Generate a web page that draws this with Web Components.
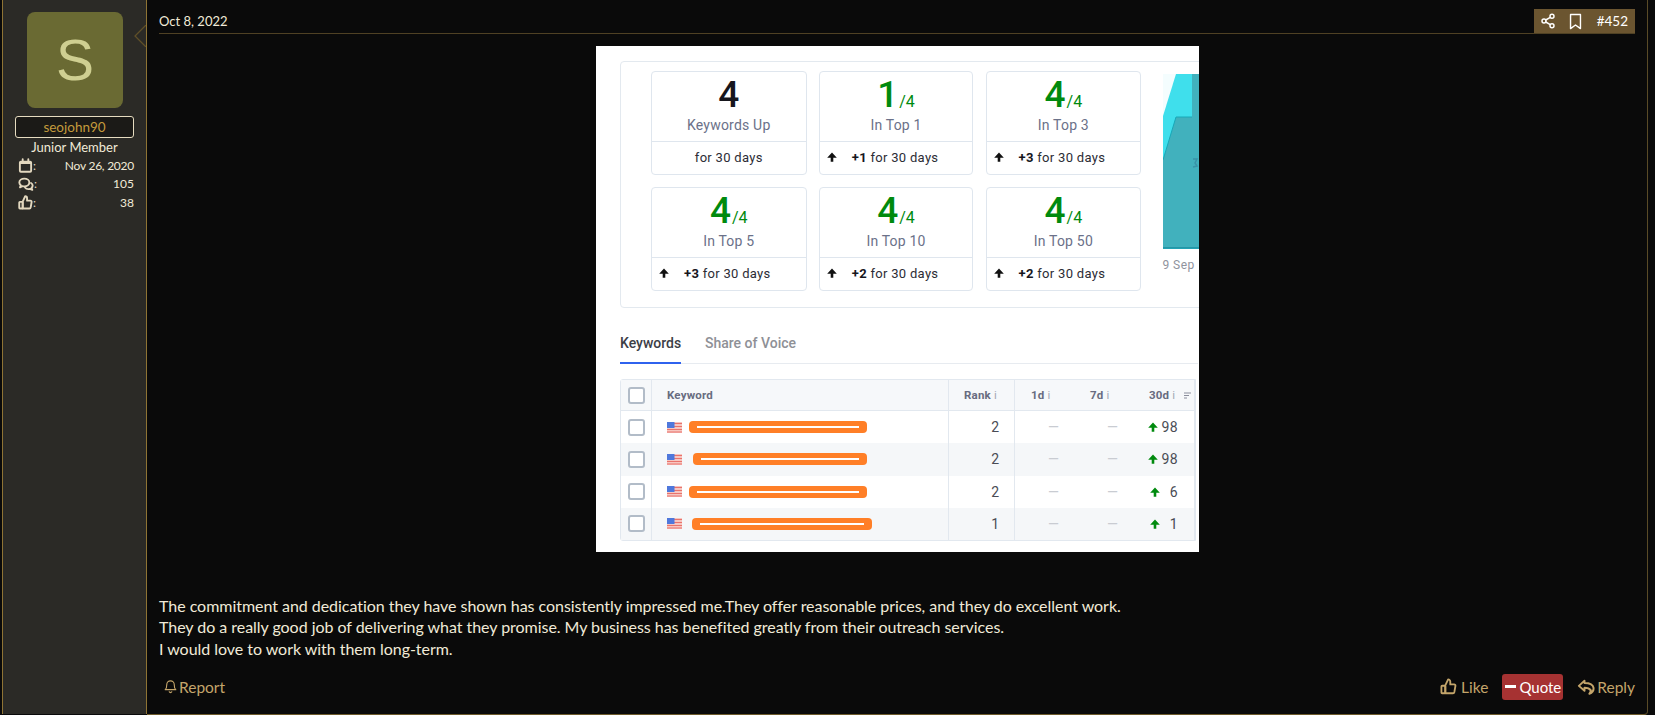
<!DOCTYPE html>
<html>
<head>
<meta charset="utf-8">
<title>Post 452</title>
<style>
  html, body { margin: 0; height: 715px; overflow: hidden; background: #0a0a0a; }
  body { font-family: "Lato", "Open Sans", sans-serif; color: #f1ead8; }
</style>
</head>
<body>
<forum-post></forum-post>

<script>
const icons = {
  share: `<circle cx="18" cy="5" r="3"/><circle cx="6" cy="12" r="3"/><circle cx="18" cy="19" r="3"/><path d="M8.6 13.5l6.8 4M15.4 6.5l-6.8 4"/>`,
  bookmark: `<path d="M5 2h14v20l-7-5-7 5z"/>`,
  calendar: `<rect x="3" y="6" width="18" height="16" rx="1.500"/><path d="M3 8h18M7.500 2v4M16.500 2v4"/>`,
  comments: `<path d="M9.500 4C5.300 4 2 6.500 2 9.700c0 1.700.9 3.100 2.300 4.100L3 17l3.800-1.700c.9.2 1.800.3 2.700.3 4.200 0 7.500-2.500 7.500-5.900S13.700 4 9.500 4z"/><path d="M19.500 10.500c1.500.9 2.500 2.300 2.500 3.900 0 1.400-.7 2.600-1.800 3.500l1.300 3-3.700-1.500c-2.800.7-5.800-.1-7.300-2.100"/>`,
  thumb: `<path d="M7.500 10.500l4-8.500c1.700 0 3 1.300 3 3v4h5.500c1.100 0 2 1 1.800 2.200l-1.500 8.500c-.2 1-1 1.800-2 1.800H7.500z"/><rect x="2" y="11" width="5.500" height="10.500" rx="1"/>`,
  bell: `<path d="M18 9a6 6 0 0 0-12 0c0 6-2.500 8-2.500 8h17S18 15 18 9z"/><path d="M10 20.500a2.200 2.200 0 0 0 4 0"/>`,
  reply: `<path d="M10 3.500L2.500 10.500 10 17v-4c4.500 0 7 1.300 8.500 3.500-.3 1.500-1 3-2 4.500 4-1.500 6-4.500 5.500-8-.6-4.200-5-6.300-12-6.300z"/>`,
};

// Draws one of the line icons above, sized by the size attribute.
class LineIcon extends HTMLElement {
  connectedCallback() {
    const size = this.getAttribute("size") || 16;
    const weight = this.getAttribute("weight") || 2;
    const root = this.shadowRoot || this.attachShadow({ mode: "open" });
    root.innerHTML = `
      <style>:host { display: inline-flex; flex: none; }</style>
      <svg width="${size}" height="${size}" viewBox="0 0 24 24" fill="none" stroke="currentColor"
        stroke-width="${weight}" stroke-linejoin="round" stroke-linecap="round">${icons[this.getAttribute("name")]}</svg>`;
  }
}
customElements.define("line-icon", LineIcon);

// Small solid up arrow used in the metric cards and the 30d column.
class UpArrow extends HTMLElement {
  connectedCallback() {
    const root = this.shadowRoot || this.attachShadow({ mode: "open" });
    root.innerHTML = `
      <style>:host { display: inline-flex; flex: none; }</style>
      <svg width="${this.getAttribute("size") || 10}" height="${this.getAttribute("size") || 10}" viewBox="0 0 10 10">
        <path fill="currentColor" d="M5 .5L9.800 5.800H6.300V9.800H3.700V5.800H.2z"/></svg>`;
  }
}
customElements.define("up-arrow", UpArrow);

const statTemplate = document.createElement("template");
statTemplate.innerHTML = `
  <style>
    :host { display: flex; align-items: center; height: 18.500px; font-size: 12px; color: #f1ead8; }
    .key { display: flex; align-items: center; color: #e3d8bf; font-size: 12px; }
    .value { margin-left: auto; }
  </style>
  <span class="key"><slot name="icon"></slot>:</span>
  <span class="value"><slot></slot></span>
`;
class UserStat extends HTMLElement {
  constructor() {
    super();
    this.attachShadow({ mode: "open" }).append(statTemplate.content.cloneNode(true));
  }
}
customElements.define("user-stat", UserStat);

const sidebarTemplate = document.createElement("template");
sidebarTemplate.innerHTML = `
  <style>
    :host {
      display: block; position: relative; box-sizing: border-box; width: 145px; height: 714px;
      margin-left: 2px; padding: 12px 12px 0 12px; background: #2b2a26;
      border-left: 1px solid #8f7434; border-right: 1px solid #8f7434;
    }
    .avatar {
      width: 96px; height: 96px; margin: 0 auto 0 12px; border-radius: 8px; background: #6a6a33; color: #cfcf91;
      display: flex; align-items: center; justify-content: center;
      font: 57px/1 "Liberation Sans", sans-serif;
    }
    .name {
      box-sizing: border-box; height: 22px; margin-top: 8px; border: 1px solid #e6dcc0; border-radius: 3px;
      background: #1b1a17; color: #c49a3c; font-size: 13.500px; line-height: 20px; text-align: center;
    }
    .title { margin-bottom: -1px; font-size: 13px; line-height: 19px; text-align: center; color: #f1ead8; }
    /* notch outline only: the fill stays the sidebar's and its border runs on behind it */
    .notch { position: absolute; right: 0; top: 25px; display: block; }
    .stats { padding-left: 3px; }
    .date { letter-spacing: -.25px; }
  </style>
  <svg class="notch" width="12" height="22" viewBox="0 0 12 22"><path d="M12 0L1 11l11 11" fill="none" stroke="#5f4f28" stroke-width="1.300"/></svg>
  <div class="avatar">S</div>
  <div class="name">seojohn90</div>
  <div class="title">Junior Member</div>
  <div class="stats">
    <user-stat><line-icon slot="icon" name="calendar" size="15" weight="3"></line-icon><span class="date">Nov 26, 2020</span></user-stat>
    <user-stat><line-icon slot="icon" name="comments" size="16" weight="2.800"></line-icon>105</user-stat>
    <user-stat><line-icon slot="icon" name="thumb" size="15" weight="3"></line-icon>38</user-stat>
  </div>
`;
class UserSidebar extends HTMLElement {
  constructor() {
    super();
    this.attachShadow({ mode: "open" }).append(sidebarTemplate.content.cloneNode(true));
  }
}
customElements.define("user-sidebar", UserSidebar);

const headerTemplate = document.createElement("template");
headerTemplate.innerHTML = `
  <style>
    :host {
      display: flex; align-items: flex-end; justify-content: space-between; height: 33px;
      border-bottom: 1px solid #4f4124; font-size: 13px; color: #f1ead8;
    }
    .date { padding-bottom: 4px; }
    .tools {
      display: flex; align-items: center; box-sizing: border-box; width: 101px; height: 24px; padding: 0 7px 0 6px;
      background: #6b5530; color: #fff; font-size: 13.500px;
    }
    .tools line-icon:nth-child(2) { margin-left: 11px; }
    .tools span { margin-left: auto; }
  </style>
  <span class="date">Oct 8, 2022</span>
  <div class="tools">
    <line-icon name="share" size="16" weight="2.200"></line-icon>
    <line-icon name="bookmark" size="17" weight="2"></line-icon>
    <span>#452</span>
  </div>
`;
class PostHeader extends HTMLElement {
  constructor() {
    super();
    this.attachShadow({ mode: "open" }).append(headerTemplate.content.cloneNode(true));
  }
}
customElements.define("post-header", PostHeader);

const cardTemplate = document.createElement("template");
cardTemplate.innerHTML = `
  <style>
    :host {
      display: flex; flex-direction: column; box-sizing: border-box; height: 104px;
      border: 1px solid #dfe6ee; border-radius: 4px; font-family: Roboto, sans-serif; background: #fff;
    }
    .top { height: 69px; border-bottom: 1px solid #dfe6ee; text-align: center; box-sizing: content-box; }
    .num { height: 43px; line-height: 46px; font-size: 37px; font-weight: 500; color: #008a0e; white-space: nowrap; }
    .num small { font-size: 16px; font-weight: 400; margin-left: 1px; }
    :host([plain]) .num { color: #16161d; }
    .label { font-size: 14px; line-height: 20px; color: #6b7189; letter-spacing: .2px; }
    .foot {
      flex: 1; display: flex; align-items: center; padding: 0 0 2px 7px; font-size: 13px; color: #2c2c35; letter-spacing: .3px; white-space: pre;
    }
    .foot b { font-weight: 700; margin-left: 15px; color: #16161d; }
    .foot up-arrow { color: #111; }
    :host([plain]) .foot { padding: 0 0 2px; justify-content: center; }
  </style>
  <div class="top">
    <div class="num"></div>
    <div class="label"></div>
  </div>
  <div class="foot"></div>
`;
class MetricCard extends HTMLElement {
  constructor() {
    super();
    this.attachShadow({ mode: "open" }).append(cardTemplate.content.cloneNode(true));
  }
  connectedCallback() {
    const num = this.shadowRoot.querySelector(".num");
    const foot = this.shadowRoot.querySelector(".foot");
    const delta = this.getAttribute("delta");
    num.textContent = this.getAttribute("value");
    if (this.hasAttribute("of")) {
      const small = document.createElement("small");
      small.textContent = "/" + this.getAttribute("of");
      num.append(small);
    }
    this.shadowRoot.querySelector(".label").textContent = this.getAttribute("label");
    foot.innerHTML = delta
      ? `<up-arrow size="10"></up-arrow><b>${delta}</b> for 30 days`
      : "for 30 days";
  }
}
customElements.define("metric-card", MetricCard);

const rowTemplate = document.createElement("template");
rowTemplate.innerHTML = `
  <style>
    :host {
      display: grid; grid-template-columns: 31px 297px 66px 1fr; height: 32.250px;
      font-family: Roboto, sans-serif; font-size: 14px; color: #4a4c55; box-sizing: border-box;
    }
    :host([shade]) { background: #f5f7f9; }
    .cell { display: flex; align-items: center; box-sizing: border-box; }
    .check { justify-content: center; border-right: 1px solid #e2e8ef; }
    .box { width: 13px; height: 13px; border: 2px solid #b2bcc8; border-radius: 3px; background: #fff; }
    .kw { padding-left: 15px; position: relative; border-right: 1px solid #e2e8ef; }
    .scribble {
      position: absolute; top: 50%; height: 12px; margin-top: -6px; background: #ff7f27; border-radius: 4px;
      box-sizing: border-box; padding: 5px 8px;
    }
    .scribble::before { content: ""; display: block; height: 2px; background: #fff; }
    .rank { justify-content: flex-end; padding-right: 15px; border-right: 1px solid #e2e8ef; }
    .rest { display: grid; grid-template-columns: 44px 59px 1fr 1px; }
    .dash { color: #c9ccd2; justify-content: flex-end; }
    .change { justify-content: flex-end; padding-right: 16px; color: #4a4c55; }
    .change span { min-width: 15px; text-align: right; margin-left: 3px; letter-spacing: .4px; }
    .change up-arrow { color: #008a0e; position: relative; }
    .end { background: #e2e8ef; }
  </style>
  <div class="cell check"><div class="box"></div></div>
  <div class="cell kw">
    <svg width="15" height="11" viewBox="0 0 15 11">
      <rect width="15" height="11" fill="#f7c6c0"/>
      <path d="M0 1.500h15M0 4.500h15M0 7.500h15M0 10h15" stroke="#e9736c" stroke-width="1.200"/>
      <rect width="7.500" height="6" fill="#4f78dc"/>
    </svg>
    <div class="scribble"></div>
  </div>
  <div class="cell rank"></div>
  <div class="rest">
    <div class="cell dash">—</div>
    <div class="cell dash">—</div>
    <div class="cell change"><up-arrow size="10"></up-arrow><span></span></div>
    <div class="end"></div>
  </div>
`;
class RankRow extends HTMLElement {
  constructor() {
    super();
    this.attachShadow({ mode: "open" }).append(rowTemplate.content.cloneNode(true));
  }
  connectedCallback() {
    const s = this.shadowRoot;
    s.querySelector(".rank").textContent = this.getAttribute("rank");
    s.querySelector(".change span").textContent = this.getAttribute("change");
    const [left, width] = this.getAttribute("scribble").split(",");
    const mark = s.querySelector(".scribble");
    mark.style.left = left + "px";
    mark.style.width = width + "px";
  }
}
customElements.define("rank-row", RankRow);

const shotTemplate = document.createElement("template");
shotTemplate.innerHTML = `
  <style>
    :host {
      display: block; box-sizing: border-box; width: 603px; height: 506px; padding: 15px 0 0 24px;
      background: #fff; overflow: hidden; font-family: Roboto, sans-serif;
    }
    .panel {
      display: flex; box-sizing: border-box; width: 640px; height: 247px; padding: 9px 0 0 30px;
      border: 1px solid #e3e9ef; border-radius: 4px;
    }
    .cards { display: grid; grid-template-columns: 155.500px 154.500px 155.500px; grid-auto-rows: 104px; column-gap: 12.300px; row-gap: 12px; }
    .chart { margin: 3px 0 0 21.500px; width: 36px; }
    .plot { display: block; }
    .chart span { display: block; margin-top: 9px; font-size: 12px; color: #8f939d; white-space: nowrap; letter-spacing: .4px; }
    .tabs { display: flex; height: 39px; margin-top: 16px; border-bottom: 1px solid #e7ebf0; font-size: 14px; font-weight: 500; width: 578px; }
    .tab { box-sizing: border-box; height: 40px; padding-top: 9px; line-height: 20px; color: #8e9096; }
    .tab.on { width: 61px; color: #3c3e46; border-bottom: 2px solid #2f62ee; margin-right: 24px; white-space: nowrap; }
    .table { width: 576px; height: 162px; margin-top: 15px; border: 1px solid #e2e8ef; box-sizing: border-box; border-radius: 3px 0 0 3px; }
    .head {
      display: grid; grid-template-columns: 31px 297px 66px 1fr; height: 30px; background: #f6f8fa; border-bottom: 1px solid #e2e8ef;
      font-size: 11.500px; font-weight: 700; color: #686c80; letter-spacing: .2px;
    }
    .head div { display: flex; align-items: center; box-sizing: border-box; }
    .head .c0 { justify-content: center; border-right: 1px solid #e2e8ef; }
    .head .c0 i { width: 13px; height: 13px; border: 2px solid #b2bcc8; border-radius: 3px; background: #fff; }
    .head .c1 { padding-left: 15px; border-right: 1px solid #e2e8ef; }
    .head .c2 { padding-left: 15px; border-right: 1px solid #e2e8ef; }
    .head .c3 { display: grid; grid-template-columns: 59px 59px 1fr 1px; padding-left: 16px; }
    .head .end { background: #e2e8ef; height: 100%; }
    .info { color: #a4a8b5; margin-left: 3px; font-weight: 400; }
    .sort { margin-left: 9px; }
  </style>
  <div class="panel">
    <div class="cards">
      <metric-card plain value="4" label="Keywords Up"></metric-card>
      <metric-card value="1" of="4" label="In Top 1" delta="+1"></metric-card>
      <metric-card value="4" of="4" label="In Top 3" delta="+3"></metric-card>
      <metric-card value="4" of="4" label="In Top 5" delta="+3"></metric-card>
      <metric-card value="4" of="4" label="In Top 10" delta="+2"></metric-card>
      <metric-card value="4" of="4" label="In Top 50" delta="+2"></metric-card>
    </div>
    <div class="chart">
      <svg class="plot" width="36" height="175" viewBox="0 0 36 175">
        <rect width="36" height="175" fill="#f4fdfe"/>
        <path d="M0 42L13 0H36V175H0z" fill="#3fdfec"/>
        <path d="M0 86L13 43H29V0H36V174H0z" fill="#41b1bd"/>
        <path d="M0 86L13 43H29" fill="none" stroke="#18a8b8"/>
        <path d="M0 174H36" stroke="#1b8ea0" stroke-width="1.500"/>
        <path d="M30 85h4l-2 4 2 3-4 1" fill="none" stroke="#3a93a8" stroke-width="1.500"/>
      </svg>
      <span>9 Sep</span>
    </div>
  </div>
  <div class="tabs">
    <div class="tab on">Keywords</div>
    <div class="tab">Share of Voice</div>
  </div>
  <div class="table">
    <div class="head">
      <div class="c0"><i></i></div>
      <div class="c1">Keyword</div>
      <div class="c2">Rank<span class="info">i</span></div>
      <div class="c3">
        <div>1d<span class="info">i</span></div>
        <div>7d<span class="info">i</span></div>
        <div>30d<span class="info">i</span>
          <svg class="sort" width="8" height="7" viewBox="0 0 8 7"><path d="M0 1h7M0 3.500h5M0 6h3" stroke="#8b8e9c"/></svg>
        </div>
        <div class="end"></div>
      </div>
    </div>
    <rank-row rank="2" change="98" scribble="37,178"></rank-row>
    <rank-row shade rank="2" change="98" scribble="41,174"></rank-row>
    <rank-row rank="2" change="6" scribble="37,178"></rank-row>
    <rank-row shade rank="1" change="1" scribble="40,180"></rank-row>
  </div>
`;
class RankShot extends HTMLElement {
  constructor() {
    super();
    this.attachShadow({ mode: "open" }).append(shotTemplate.content.cloneNode(true));
  }
}
customElements.define("rank-shot", RankShot);

const actionTemplate = document.createElement("template");
actionTemplate.innerHTML = `
  <style>
    :host {
      display: inline-flex; align-items: center; box-sizing: border-box; height: 26px; gap: 1px;
      color: #c4a56a; font-size: 15.500px; white-space: nowrap;
    }
    :host([active]) { background: #a63232; color: #fff; border-radius: 3px; padding: 0 2px 0 3px; font-size: 15px; }
    .dash { width: 11px; height: 3px; margin: 0 2px 0 0; background: #fff; display: none; }
    :host([active]) .dash { display: block; }
  </style>
  <span class="dash"></span><slot></slot>
`;
class PostAction extends HTMLElement {
  constructor() {
    super();
    this.attachShadow({ mode: "open" }).append(actionTemplate.content.cloneNode(true));
  }
}
customElements.define("post-action", PostAction);

const postTemplate = document.createElement("template");
postTemplate.innerHTML = `
  <style>
    :host { display: flex; position: relative; height: 715px; width: 1655px; background: #0a0a0a; }
    main {
      box-sizing: border-box; width: 1501px; height: 715px; padding: 0 12px; border-right: 1px solid #5a4b27;
      border-bottom: 1px solid #6d5a2b; border-bottom-right-radius: 4px;
      display: flex; flex-direction: column;
    }
    rank-shot { margin: 12px 0 0 437px; }
    .body { margin-top: 42.500px; font-size: 16px; line-height: 21.500px; color: #f1ead8; letter-spacing: -.035px; }
    footer { display: flex; align-items: center; margin-top: 14.500px; padding-left: 4px; gap: 14px; }
    footer .gap { margin-left: auto; }
    .like { gap: 4px; }
    .reply { gap: 2px; }
  </style>
  <user-sidebar></user-sidebar>
  <main>
    <post-header></post-header>
    <rank-shot></rank-shot>
    <div class="body">
      The commitment and dedication they have shown has consistently impressed me.They offer reasonable prices, and they do excellent work.<br>
      They do a really good job of delivering what they promise. My business has benefited greatly from their outreach services.<br>
      I would love to work with them long-term.
    </div>
    <footer>
      <post-action><line-icon name="bell" size="15" weight="1.800"></line-icon>Report</post-action>
      <post-action class="gap like"><line-icon name="thumb" size="17" weight="2.600"></line-icon>Like</post-action>
      <post-action active>Quote</post-action>
      <post-action class="reply"><line-icon name="reply" size="18" weight="2.600"></line-icon>Reply</post-action>
    </footer>
  </main>
`;
class ForumPost extends HTMLElement {
  constructor() {
    super();
    this.attachShadow({ mode: "open" }).append(postTemplate.content.cloneNode(true));
  }
}
customElements.define("forum-post", ForumPost);
</script>
</body>
</html>
